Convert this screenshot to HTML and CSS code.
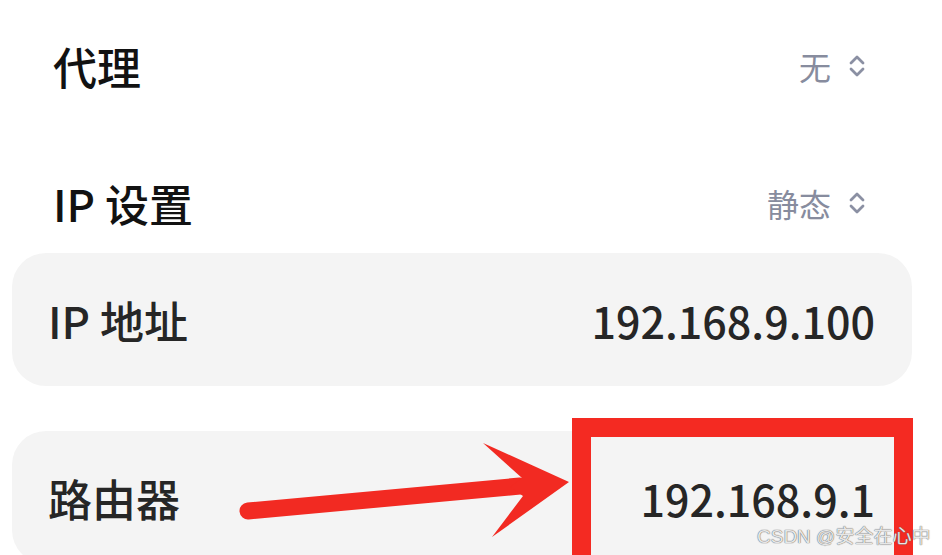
FILE: index.html
```html
<!DOCTYPE html>
<html lang="zh">
<head>
<meta charset="utf-8">
<link rel="stylesheet" href="styles.css">
</head>
<body>
<div class="page">
  <div class="setting setting-proxy">
    <span class="label">代理</span>
    <span class="picker">无
      <svg class="chev" width="18" height="26" viewBox="0 0 18 26"><path d="M3 10 L9 4 L15 10 M3 16 L9 22 L15 16" fill="none" stroke="#8b90a3" stroke-width="2.8" stroke-linecap="round" stroke-linejoin="round"/></svg>
    </span>
  </div>
  <div class="setting setting-ip">
    <span class="label">IP 设置</span>
    <span class="picker">静态
      <svg class="chev" width="18" height="26" viewBox="0 0 18 26"><path d="M3 10 L9 4 L15 10 M3 16 L9 22 L15 16" fill="none" stroke="#8b90a3" stroke-width="2.8" stroke-linecap="round" stroke-linejoin="round"/></svg>
    </span>
  </div>
  <div class="card">
    <span class="label">IP 地址</span>
    <span class="value">192.168.9.100</span>
  </div>
  <div class="card card-gap">
    <span class="label">路由器</span>
    <span class="value">192.168.9.1</span>
  </div>
</div>
<svg class="arrow" width="942" height="555" viewBox="0 0 942 555">
  <line x1="248" y1="511" x2="520" y2="486" stroke="#f22a22" stroke-width="17" stroke-linecap="round"/>
  <polygon points="483,443 569,482 492,537 523,496 510,487 522,478" fill="#f22a22"/>
</svg>
<div class="redbox"></div>
<div class="watermark">CSDN @安全在心中</div>
</body>
</html>
```
FILE: styles.css
```css
html, body {
  margin: 0;
  padding: 0;
  background: #ffffff;
}
body {
  width: 942px;
  height: 555px;
  overflow: hidden;
  position: relative;
  font-family: "Noto Sans CJK SC", "Noto Sans", sans-serif;
}
.page {
  width: 900px;
  padding-left: 12px;
  display: flex;
  flex-direction: column;
}
.setting {
  display: flex;
  align-items: center;
  justify-content: space-between;
  padding: 0 46px 0 41px;
}
.setting-proxy {
  margin-top: 17px;
  height: 98px;
}
.setting-ip {
  margin-top: 38px;
  height: 100px;
}
.label {
  font-size: 44px;
  font-weight: 500;
  color: #121212;
}
.picker {
  display: flex;
  align-items: center;
  gap: 17px;
  font-size: 32px;
  color: #878c9e;
}
.chev {
  display: block;
}
.card {
  height: 133px;
  background: #f4f4f4;
  border-radius: 34px;
  display: flex;
  align-items: center;
  justify-content: space-between;
  padding: 0 37px 0 36px;
}
.card .label {
  color: #262626;
}
.card-gap {
  margin-top: 45px;
}
.value {
  font-size: 43px;
  font-weight: 500;
  color: #262626;
}
.arrow {
  position: absolute;
  left: 0;
  top: 0;
}
.redbox {
  position: absolute;
  left: 572px;
  top: 418px;
  width: 303px;
  height: 160px;
  border: 19px solid #f42a22;
}
.watermark {
  position: absolute;
  left: 757px;
  top: 521px;
  font-size: 19px;
  color: rgba(255,255,255,0.85);
  text-shadow: 0 0 1px #666, 0 0 1px #666;
  font-family: "Liberation Sans", "Noto Sans CJK SC", sans-serif;
}
```
